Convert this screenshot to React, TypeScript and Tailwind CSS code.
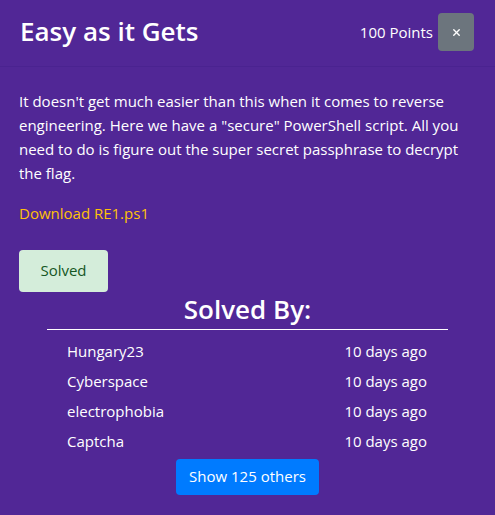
import { X } from 'lucide-react';

const solvers = [
  { name: 'Hungary23', when: '10 days ago' },
  { name: 'Cyberspace', when: '10 days ago' },
  { name: 'electrophobia', when: '10 days ago' },
  { name: 'Captcha', when: '10 days ago' },
];

export default function App() {
  return (
    <div className="w-[495px] h-[515px] overflow-hidden bg-[#512796] text-white font-['Open_Sans',sans-serif]">
      {/* Cabecera */}
      <div className="flex items-center h-[67px] pl-5 pr-[21px] pb-[2px] border-b border-[#4a2390]">
        <h4 className="flex-1 text-[26px] font-semibold leading-none mb-[3px]">Easy as it Gets</h4>
        <span className="text-[15px] mr-[5px]">100 Points</span>
        <button className="w-9 h-[38px] rounded bg-[#6c757d] flex items-center justify-center">
          <X className="w-[11px] h-[11px]" strokeWidth={3} />
        </button>
      </div>

      {/* Cuerpo */}
      <div className="px-[19px] pt-[22px]">
        <p className="text-[15px] leading-6">
          It doesn't get much easier than this when it comes to reverse engineering. Here we have a "secure"
          PowerShell script. All you need to do is figure out the super secret passphrase to decrypt the flag.
        </p>
        <a className="block mt-[17px] text-[15px] text-[#ffc107]">Download RE1.ps1</a>

        <button className="mt-[25px] w-[89px] h-[42px] rounded bg-[#d4edda] text-[#155724] text-[15px]">
          Solved
        </button>

        <div className="mx-[28px]">
          <h3 className="text-center text-[26px] font-semibold leading-[35px]">Solved By:</h3>
          <div className="border-t border-white mt-[2px]" />
          <div className="pl-5 pr-[21px] pt-[7px]">
            {solvers.map((s) => (
              <div key={s.name} className="flex justify-between h-[30px] items-center text-[15px]">
                <span>{s.name}</span>
                <span>{s.when}</span>
              </div>
            ))}
          </div>
          <div className="flex justify-center mt-[2px]">
            <button className="h-9 px-[13px] rounded bg-[#007bff] text-[15px]">Show 125 others</button>
          </div>
        </div>
      </div>
    </div>
  );
}
